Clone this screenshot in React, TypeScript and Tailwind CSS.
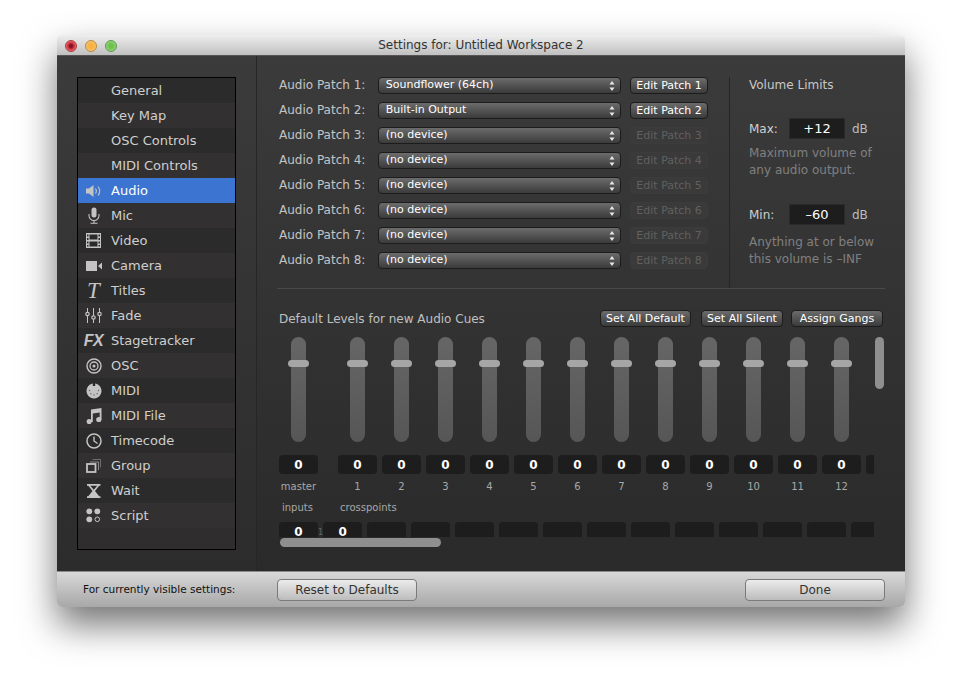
import { FC, ReactNode } from "react";

const ICON = "#c4c4c4";

const Speaker = () => (
  <svg width="18" height="16" viewBox="0 0 18 16" fill="none">
    <path d="M1 5.5h3L8.5 2v12L4 10.5H1z" fill={ICON} />
    <path d="M10.5 5.5c1 1.4 1 3.6 0 5M13 3.5c2 2.6 2 6.400 0 9" stroke={ICON} strokeWidth="1.100" />
  </svg>
);
const Mic = () => (
  <svg width="14" height="17" viewBox="0 0 14 17" fill="none">
    <rect x="4.500" y="0.500" width="5" height="10" rx="2.500" fill={ICON} />
    <path d="M2 7v1.500a5 5 0 0 0 10 0V7M7 13.500V16M3.500 16.300h7" stroke={ICON} strokeWidth="1.100" />
  </svg>
);
const Film = () => (
  <svg width="15" height="15" viewBox="0 0 15 15">
    <path fillRule="evenodd" fill={ICON} d="M0 0h15v15H0zM3.500 1.500v5h8v-5zM3.500 8.500v5h8v-5zM1 1.500v2h1.500v-2zM1 5v2h1.500V5zM1 8.500v2h1.500v-2zM1 12v1.500h1.500V12zM12.500 1.500v2H14v-2zM12.500 5v2H14V5zM12.500 8.500v2H14v-2zM12.500 12v1.500H14V12z" />
  </svg>
);
const Camera = () => (
  <svg width="16" height="10" viewBox="0 0 16 10">
    <rect width="11" height="10" fill={ICON} />
    <path d="M12 5l4-3.500v7z" fill={ICON} />
  </svg>
);
const Sliders = () => (
  <svg width="17" height="15" viewBox="0 0 17 15" fill="none" stroke={ICON}>
    <path d="M2.500 0v15M8.500 0v15M14.500 0v15" strokeWidth="1" />
    <circle cx="2.500" cy="6" r="1.700" fill="#2f2e2e" strokeWidth="1.200" />
    <circle cx="8.500" cy="9.500" r="1.700" fill="#2f2e2e" strokeWidth="1.200" />
    <circle cx="14.500" cy="6" r="1.700" fill="#2f2e2e" strokeWidth="1.200" />
  </svg>
);
const Target = () => (
  <svg width="16" height="16" viewBox="0 0 16 16" fill="none" stroke={ICON}>
    <circle cx="8" cy="8" r="7" strokeWidth="1.400" />
    <circle cx="8" cy="8" r="4" strokeWidth="1.300" />
    <circle cx="8" cy="8" r="1.500" fill={ICON} stroke="none" />
  </svg>
);
const Din = () => (
  <svg width="16" height="16" viewBox="0 0 16 16">
    <path d="M6.800 0.600a7.500 7.500 0 1 0 2.400 0V3H6.800z" fill={ICON} />
    <g fill="#6f6f6f">
      <circle cx="3.500" cy="7.500" r=".8" />
      <circle cx="4.800" cy="10.800" r=".8" />
      <circle cx="8" cy="12" r=".8" />
      <circle cx="11.200" cy="10.800" r=".8" />
      <circle cx="12.500" cy="7.500" r=".8" />
    </g>
  </svg>
);
const Note = () => (
  <svg width="16" height="16" viewBox="0 0 16 16">
    <path d="M5 1.500L15.500 0v11.500h-1.800V4.500L6.800 5.500v8.500H5z" fill={ICON} />
    <circle cx="3.200" cy="13.600" r="2.600" fill={ICON} />
    <circle cx="12.800" cy="11.500" r="2.600" fill={ICON} />
  </svg>
);
const Clock = () => (
  <svg width="16" height="16" viewBox="0 0 16 16" fill="none" stroke={ICON}>
    <circle cx="8" cy="8" r="7" strokeWidth="1.500" />
    <path d="M8 3.500V8l3.500 2.500" strokeWidth="1.400" />
  </svg>
);
const Stack = () => (
  <svg width="15" height="14" viewBox="0 0 15 14" fill="none">
    <path d="M6.500 0.500h8v8" stroke="#8a8a8a" strokeWidth=".7" />
    <path d="M4 3h8.500v8" stroke="#a4a4a4" strokeWidth=".8" />
    <rect x="1" y="5" width="8.500" height="8" stroke={ICON} strokeWidth="1.800" />
  </svg>
);
const Hourglass = () => (
  <svg width="14" height="14" viewBox="0 0 14 14">
    <path fillRule="evenodd" fill={ICON} d="M0 0h13.500v1.800h-1.300L8 7l4.200 5.200h1.300V14H0v-1.800h1.300L5.500 7 1.300 1.800H0zM3.300 1.800l3.450 4 3.450-4z" />
  </svg>
);
const Dots = () => (
  <svg width="15" height="15" viewBox="0 0 15 15">
    <circle cx="3.300" cy="3.300" r="2.900" fill={ICON} />
    <circle cx="11.300" cy="3.300" r="2.900" fill={ICON} />
    <circle cx="3.300" cy="11.300" r="2.900" fill={ICON} />
    <circle cx="11.300" cy="11.300" r="2.300" fill="none" stroke={ICON} strokeWidth="1" />
  </svg>
);

const sidebar: { name: string; icon?: ReactNode }[] = [
  { name: "General" },
  { name: "Key Map" },
  { name: "OSC Controls" },
  { name: "MIDI Controls" },
  { name: "Audio", icon: <Speaker /> },
  { name: "Mic", icon: <Mic /> },
  { name: "Video", icon: <Film /> },
  { name: "Camera", icon: <Camera /> },
  {
    name: "Titles",
    icon: <span className="font-['Liberation_Serif',serif] italic text-[23px] leading-none text-[#c4c4c4]">T</span>,
  },
  { name: "Fade", icon: <Sliders /> },
  {
    name: "Stagetracker",
    icon: <span className="font-['Liberation_Sans',sans-serif] italic font-bold text-[16px] leading-none tracking-[-0.5px] text-[#c4c4c4]">FX</span>,
  },
  { name: "OSC", icon: <Target /> },
  { name: "MIDI", icon: <Din /> },
  { name: "MIDI File", icon: <Note /> },
  { name: "Timecode", icon: <Clock /> },
  { name: "Group", icon: <Stack /> },
  { name: "Wait", icon: <Hourglass /> },
  { name: "Script", icon: <Dots /> },
];

const patches = [
  { device: "Soundflower (64ch)", active: true },
  { device: "Built-in Output", active: true },
  { device: "(no device)", active: false },
  { device: "(no device)", active: false },
  { device: "(no device)", active: false },
  { device: "(no device)", active: false },
  { device: "(no device)", active: false },
  { device: "(no device)", active: false },
];

const channels = ["1", "2", "3", "4", "5", "6", "7", "8", "9", "10", "11", "12"];

const DarkButton: FC<{ label: string; className: string; disabled?: boolean }> = ({ label, className, disabled }) => (
  <button
    className={
      disabled
        ? `h-[17px] rounded-[4px] border border-[#3c3c3c] bg-[#3a3a3a] text-[11px] leading-none text-[#606060] ${className}`
        : `h-[17px] rounded-[4px] border border-[#1c1c1c] bg-gradient-to-b from-[#6c6c6c] to-[#3b3b3b] text-[11px] leading-none text-white ${className}`
    }
  >
    {label}
  </button>
);

const Fader: FC<{ value: string; label: string }> = ({ value, label }) => (
  <div className="flex w-[39px] shrink-0 flex-col items-center">
    <div className="relative h-[105px] w-[15px] rounded-full bg-gradient-to-b from-[#666666] to-[#565656]">
      <div className="absolute left-[-3px] top-[23px] h-[7px] w-[21px] rounded-full bg-[#a6a6a6]" />
    </div>
    <div className="mt-[13px] flex h-[19px] w-[39px] items-center justify-center rounded-[4px] bg-[#1e1d1d] text-[12px] font-bold text-white">
      {value}
    </div>
    <div className="mt-[6px] h-[14px] text-[10px] leading-[14px] text-[#a8a8a8]">{label}</div>
  </div>
);

const SmallBox: FC<{ value?: string }> = ({ value }) => (
  <div className="flex h-[19px] w-[39px] shrink-0 items-center justify-center rounded-[4px] bg-[#1e1d1d] text-[12px] font-bold text-white">
    {value}
  </div>
);

export default function App() {
  return (
    <div className="h-[686px] w-[962px] overflow-hidden bg-white pl-[57px] pt-[35px] font-['DejaVu_Sans',sans-serif]">
      <div className="flex h-[572px] w-[848px] flex-col overflow-hidden rounded-[5px] shadow-[0_18px_36px_rgba(0,0,0,0.55)]">
        <div className="relative flex h-[21px] shrink-0 items-center justify-center border-b border-[#555555] bg-gradient-to-b from-[#eeeeee] to-[#c0c0c0]">
          <div className="absolute left-[8px] top-[5px] flex gap-[8px]">
            <span className="h-[12px] w-[12px] rounded-full border border-[#a83a3a] bg-[radial-gradient(circle,#8a1020_20%,#e8505a_60%,#f7a0a0)]" />
            <span className="h-[12px] w-[12px] rounded-full border border-[#b98a3a] bg-[radial-gradient(circle,#f8b040_30%,#f5c470_70%,#fde0a8)]" />
            <span className="h-[12px] w-[12px] rounded-full border border-[#5a9a4a] bg-[radial-gradient(circle,#70c050_30%,#90d478_70%,#c8ecb0)]" />
          </div>
          <span className="text-[12px] text-[#333333]">Settings for: Untitled Workspace 2</span>
        </div>

        <div className="flex min-h-0 flex-1">
          <div className="w-[200px] shrink-0 border-r border-[#262626] bg-gradient-to-b from-[#3b3b3b] to-[#2c2c2c] pl-[20px] pt-[21px]">
            <div className="h-[473px] w-[159px] border border-black bg-[#2f2d2d]">
              {sidebar.map((item, i) => (
                <div
                  key={item.name}
                  className={`flex h-[25px] items-center gap-[8px] pl-[6px] text-[13px] ${
                    item.name === "Audio"
                      ? "bg-[#3b74d1] text-white"
                      : i % 2 === 0
                        ? "bg-[#2c2b2b] text-[#cfcfcf]"
                        : "bg-[#323030] text-[#cfcfcf]"
                  }`}
                >
                  <span className="flex w-[19px] justify-center">{item.icon}</span>
                  <span>{item.name}</span>
                </div>
              ))}
            </div>
          </div>

          <div className="flex min-w-0 flex-1 flex-col bg-gradient-to-b from-[#3b3b3b] to-[#2a2a2a] px-[20px] pt-[21px]">
            <div className="flex h-[212px] shrink-0 border-b border-[#4a4a4a]">
              <div className="flex w-[453px] shrink-0 flex-col gap-[8px] border-r border-[#262626] pr-[21px]">
                {patches.map((p, i) => (
                  <div key={i} className="flex items-center">
                    <span className="w-[101px] pl-[2px] text-[12px] leading-[17px] text-[#c4c4c4]">Audio Patch {i + 1}:</span>
                    <div className="flex h-[17px] w-[244px] items-center justify-between rounded-[4px] border border-[#1c1c1c] bg-gradient-to-b from-[#6c6c6c] to-[#3b3b3b] pl-[7px] pr-[5px] text-[11px] text-white">
                      <span>{p.device}</span>
                      <svg width="6" height="10" viewBox="0 0 6 10" fill="#e8e8e8">
                        <path d="M3 0l2.500 3.500h-5zM3 10L.5 6.500h5z" />
                      </svg>
                    </div>
                    <DarkButton label={`Edit Patch ${i + 1}`} disabled={!p.active} className="ml-[9px] w-[78px]" />
                  </div>
                ))}
              </div>
              <div className="flex-1 pl-[19px]">
                <div className="text-[12px] leading-[17px] text-[#c8c8c8]">Volume Limits</div>
                <div className="mt-[24px] flex items-center">
                  <span className="w-[40px] text-[12px] text-[#cfcfcf]">Max:</span>
                  <span className="flex h-[21px] w-[56px] items-center justify-center border border-[#2a2a2a] bg-[#1e1d1d] text-[13px] text-white">+12</span>
                  <span className="ml-[7px] text-[12px] text-[#bdbdbd]">dB</span>
                </div>
                <p className="mt-[6px] text-[12px] leading-[17px] text-[#808080]">Maximum volume of<br />any audio output.</p>
                <div className="mt-[25px] flex items-center">
                  <span className="w-[40px] text-[12px] text-[#cfcfcf]">Min:</span>
                  <span className="flex h-[21px] w-[56px] items-center justify-center border border-[#2a2a2a] bg-[#1e1d1d] text-[13px] text-white">–60</span>
                  <span className="ml-[7px] text-[12px] text-[#bdbdbd]">dB</span>
                </div>
                <p className="mt-[9px] text-[12px] leading-[17px] text-[#808080]">Anything at or below<br />this volume is –INF</p>
              </div>
            </div>

            <div className="mt-[21px] flex h-[17px] items-center pl-[2px]">
              <span className="text-[12px] text-[#c0c0c0]">Default Levels for new Audio Cues</span>
              <div className="ml-auto flex pr-[2px]">
                <DarkButton label="Set All Default" className="w-[91px]" />
                <DarkButton label="Set All Silent" className="ml-[10px] w-[82px]" />
                <DarkButton label="Assign Gangs" className="ml-[8px] w-[92px]" />
              </div>
            </div>

            <div className="relative mt-[10px] h-[211px]">
              <div className="ml-[2px] h-[200px] w-[595px] overflow-hidden">
                <div className="flex">
                  <Fader value="0" label="master" />
                  <div className="ml-[20px] flex gap-[5px]">
                    {channels.map((c) => (
                      <Fader key={c} value="0" label={c} />
                    ))}
                    <SmallBoxColumn />
                  </div>
                </div>
                <div className="mt-[7px] flex h-[14px] text-[10px] leading-[14px] text-[#a8a8a8]">
                  <span className="w-[59px] pl-[3px]">inputs</span>
                  <span className="pl-[2px]">crosspoints</span>
                </div>
                <div className="mt-[7px] flex">
                  <SmallBox value="0" />
                  <div className="w-[20px] pt-[5px] text-center text-[8px] text-[#666666]">1</div>
                  <div className="flex gap-[5px]">
                    <SmallBox value="0" />
                    {channels.map((c) => (
                      <SmallBox key={c} />
                    ))}
                  </div>
                </div>
              </div>
              <div className="absolute left-[3px] top-[201px] h-[9px] w-[161px] rounded-full bg-[#8f8f8f]" />
              <div className="absolute left-[598px] top-0 h-[52px] w-[9px] rounded-full bg-[#8f8f8f]" />
            </div>
          </div>
        </div>

        <div className="flex h-[36px] shrink-0 items-center border-t border-[#8a8a8a] bg-gradient-to-b from-[#d8d8d8] to-[#a8a8a8] pl-[26px] pr-[20px]">
          <span className="w-[194px] text-[10.500px] text-[#111111]">For currently visible settings:</span>
          <button className="h-[22px] w-[140px] rounded-[4px] border border-[#7a7a7a] bg-gradient-to-b from-[#ececec] to-[#bcbcbc] text-[12px] text-[#333333]">
            Reset to Defaults
          </button>
          <button className="ml-auto h-[22px] w-[140px] rounded-[4px] border border-[#7a7a7a] bg-gradient-to-b from-[#ececec] to-[#bcbcbc] text-[12px] text-[#333333]">
            Done
          </button>
        </div>
      </div>
    </div>
  );
}

const SmallBoxColumn = () => (
  <div className="w-[39px] shrink-0 pt-[118px]">
    <SmallBox />
  </div>
);
